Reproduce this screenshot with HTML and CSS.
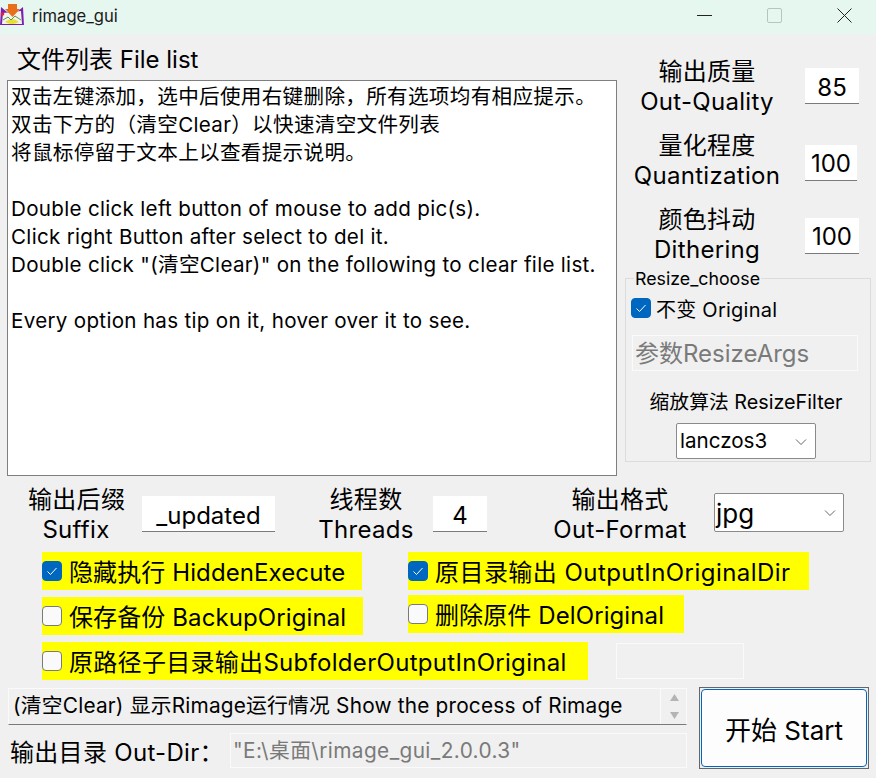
FILE: index.html
```html
<!DOCTYPE html>
<html lang="zh">
<head>
<meta charset="utf-8">
<title>rimage_gui</title>
<link rel="stylesheet" href="styles.css">
</head>
<body>
<div class="window">
  <header class="titlebar">
    <svg class="logo" viewBox="0 0 24 24" width="24" height="24">
      <path d="M1 6 L7 11 H17 L23 6 L24 25 H0 Z" fill="#7a1fb0"/>
      <path d="M3 12 L21 10 L22 23 H2 Z" fill="#f4f4ec"/>
      <path d="M5 21 Q12 15 19 21 Q12 25 5 21 Z" fill="#e8e030"/>
      <path d="M3 19 L8 16 L11 19 L15 15 L21 19" fill="none" stroke="#4a9a5a" stroke-width="1"/>
      <circle cx="2.5" cy="13" r="1.8" fill="#e02040"/>
      <path d="M8 3 H17 V8 H20 L12.5 16 L5 8 H8 Z" fill="#e8701a"/>
    </svg>
    <span class="app-name">rimage_gui</span>
    <div class="win-buttons">
      <svg class="win-btn" viewBox="0 0 15 15" width="15" height="15"><path d="M0 7.5 H15" stroke="#222" stroke-width="1" fill="none"/></svg>
      <svg class="win-btn" viewBox="0 0 15 15" width="15" height="15"><rect x="0.5" y="0.5" width="14" height="14" rx="1.5" fill="none" stroke="#b8c4c0" stroke-width="1"/></svg>
      <svg class="win-btn" viewBox="0 0 15 15" width="15" height="15"><path d="M0.5 0.5 L14.5 14.5 M14.5 0.5 L0.5 14.5" stroke="#222" stroke-width="1" fill="none"/></svg>
    </div>
  </header>

  <main class="content">
    <section class="top">
      <div class="files">
        <div class="files-title">文件列表 File list</div>
        <div class="file-list">
          <p>双击左键添加，选中后使用右键删除，所有选项均有相应提示。</p>
          <p>双击下方的（清空Clear）以快速清空文件列表</p>
          <p>将鼠标停留于文本上以查看提示说明。</p>
          <p>&nbsp;</p>
          <p>Double click left button of mouse to add pic(s).</p>
          <p>Click right Button after select to del it.</p>
          <p>Double click "(清空Clear)" on the following to clear file list.</p>
          <p>&nbsp;</p>
          <p>Every option has tip on it, hover over it to see.</p>
        </div>
      </div>
      <aside class="settings">
        <div class="setting">
          <div class="label label-setting">输出质量<br>Out-Quality</div>
          <div class="field field-q">85</div>
        </div>
        <div class="setting">
          <div class="label label-setting">量化程度<br>Quantization</div>
          <div class="field field-z">100</div>
        </div>
        <div class="setting">
          <div class="label label-setting">颜色抖动<br>Dithering</div>
          <div class="field field-d">100</div>
        </div>
        <div class="group">
          <div class="legend">Resize_choose</div>
          <div class="check check-orig"><span class="box on"><svg viewBox="0 0 20 20" width="20" height="20"><path d="M5.5 10.5 L8.5 13.5 L14.5 7" fill="none" stroke="#fff" stroke-width="1"/></svg></span><span>不变 Original</span></div>
          <div class="disabled-field args">参数ResizeArgs</div>
          <div class="filter-label">缩放算法 ResizeFilter</div>
          <div class="select select-filter">lanczos3<svg class="chev" viewBox="0 0 12 8" width="12" height="8"><path d="M1 1.5 L6 6.5 L11 1.5" fill="none" stroke="#666" stroke-width="1"/></svg></div>
        </div>
      </aside>
    </section>

    <section class="options">
      <div class="label label-suffix">输出后缀<br>Suffix</div>
      <div class="field field-suffix">_updated</div>
      <div class="label label-threads">线程数<br>Threads</div>
      <div class="field field-threads">4</div>
      <div class="label label-format">输出格式<br>Out-Format</div>
      <div class="select select-format">jpg<svg class="chev" viewBox="0 0 12 8" width="12" height="8"><path d="M1 1.5 L6 6.5 L11 1.5" fill="none" stroke="#666" stroke-width="1"/></svg></div>
    </section>

    <section class="checks">
      <div class="check-col">
        <div class="check hl hl-hidden"><span class="box on"><svg viewBox="0 0 20 20" width="20" height="20"><path d="M5.5 10.5 L8.5 13.5 L14.5 7" fill="none" stroke="#fff" stroke-width="1"/></svg></span><span class="hl-text">隐藏执行 HiddenExecute</span></div>
        <div class="check hl hl-backup"><span class="box"></span><span class="hl-text">保存备份 BackupOriginal</span></div>
      </div>
      <div class="check-col check-col-right">
        <div class="check hl hl-dir"><span class="box on"><svg viewBox="0 0 20 20" width="20" height="20"><path d="M5.5 10.5 L8.5 13.5 L14.5 7" fill="none" stroke="#fff" stroke-width="1"/></svg></span><span class="hl-text">原目录输出 OutputInOriginalDir</span></div>
        <div class="check hl hl-del"><span class="box"></span><span class="hl-text">删除原件 DelOriginal</span></div>
      </div>
    </section>
    <section class="sub-row">
      <div class="check hl hl-sub"><span class="box"></span><span class="hl-text">原路径子目录输出SubfolderOutputInOriginal</span></div>
      <div class="disabled-field blank"></div>
    </section>

    <section class="bottom">
      <div class="bottom-left">
        <div class="process">
          <span class="process-text">(清空Clear) 显示Rimage运行情况 Show the process of Rimage</span>
          <div class="spin">
            <svg viewBox="0 0 9 7" width="9" height="7"><path d="M4.5 0 L9 7 H0 Z" fill="#b4b4b4"/></svg>
            <svg viewBox="0 0 9 7" width="9" height="7"><path d="M4.5 7 L9 0 H0 Z" fill="#b4b4b4"/></svg>
          </div>
        </div>
        <div class="outdir">
          <div class="label outdir-label">输出目录 Out-Dir：</div>
          <div class="disabled-field path">"E:\桌面\rimage_gui_2.0.0.3"</div>
        </div>
      </div>
      <div class="start-wrap"><button class="start" type="button">开始 Start</button></div>
    </section>
  </main>
</div>
</body>
</html>
```
FILE: styles.css
```css
* { box-sizing: border-box; }
html, body { margin: 0; padding: 0; }
body {
  width: 876px;
  height: 778px;
  overflow: hidden;
  background: #f0f0f0;
  color: #000;
  font-family: "Inter", "Noto Sans CJK SC", sans-serif;
}
.window { display: flex; flex-direction: column; height: 778px; }

.titlebar {
  height: 34px;
  flex: none;
  display: flex;
  align-items: center;
  background: #e6f7f0;
}
.logo { flex: none; margin-top: -8px; }
.app-name { margin: -2px 0 0 8px; font-size: 16.6px; color: #1a1a1a; }
.win-buttons { margin-left: auto; display: flex; gap: 55px; margin-right: 24px; margin-top: -3px; }
.win-btn { display: block; }

.content { display: flex; flex-direction: column; flex: 1; }

.top { display: flex; height: 444px; }
.files { width: 610px; margin-left: 7px; }
.files-title { height: 46px; padding-left: 10px; font-size: 24px; line-height: 52px; }
.file-list {
  height: 396px;
  background: #fff;
  border: 1px solid #7f7f7f;
  padding: 2px 3px;
  font-size: 20.6px;
  letter-spacing: 0.3px;
  line-height: 28px;
}
.file-list p { margin: 0; white-space: nowrap; }

.settings { width: 246px; margin-left: 8px; padding-top: 22px; display: flex; flex-direction: column; }
.setting { height: 60px; margin-bottom: 14px; display: flex; align-items: center; }
.label { font-size: 24px; letter-spacing: 0.3px; line-height: 30px; text-align: center; white-space: nowrap; }
.label-setting { width: 164px; padding-top: 2px; }
.field {
  background: #fff;
  border-bottom: 1px solid #7a7a7a;
  height: 36px;
  padding-top: 2px;
  font-size: 24px;
  line-height: 35px;
  text-align: center;
  margin-left: 16px;
}
.field-q { width: 54px; }
.field-z { width: 52px; margin-top: 6px; padding-top: 1px; }
.field-d { width: 54px; margin-top: 4px; padding-top: 1px; }

.group {
  position: relative;
  height: 184px;
  border: 1px solid #dcdcdc;
  display: flex;
  flex-direction: column;
}
.legend {
  position: absolute;
  left: 8px;
  top: -11px;
  padding: 0 1px;
  background: #f0f0f0;
  font-size: 17.8px;
  line-height: 22px;
}
.check { display: flex; align-items: center; white-space: nowrap; }
.check-orig { margin: 19px 0 0 5px; height: 20px; font-size: 20px; letter-spacing: 0.25px; }
.box {
  flex: none;
  width: 20px;
  height: 20px;
  margin-right: 7px;
  border: 1px solid #7a7a7a;
  border-radius: 4px;
  background: #fafafa;
}
.box svg { display: block; margin: -1px; }
.box.on { background: #0067c0; border-color: #0067c0; }
.check-orig .box { margin-right: 5px; }

.disabled-field {
  border: 1px solid #fafafa;
  background: #f0f0f0;
  color: #7a7a7a;
  white-space: nowrap;
}
.args { margin: 17px 0 0 6px; width: 226px; height: 36px; font-size: 24px; line-height: 35px; padding-left: 2px; }
.filter-label { margin-top: 18px; text-align: center; font-size: 19.8px; line-height: 26px; white-space: nowrap; width: 240px; }
.select {
  position: relative;
  background: #fff;
  border: 1px solid #8a8a8a;
  border-radius: 2px;
  white-space: nowrap;
}
.select-filter { margin: 8px 0 0 50px; width: 140px; height: 36px; font-size: 20.6px; line-height: 33px; padding-left: 3px; }
.chev { position: absolute; right: 8px; top: 14px; }

.options { display: flex; height: 60px; align-items: flex-start; }
.label-suffix { width: 96px; margin: 7px 0 0 28px; }
.field-suffix { width: 133px; margin: 18px 0 0 18px; }
.label-threads { width: 100px; margin: 7px 0 0 41px; }
.field-threads { width: 54px; margin: 18px 0 0 17px; }
.label-format { width: 150px; margin: 7px 0 0 58px; }
.select-format { width: 130px; height: 39px; margin: 15px 0 0 19px; font-size: 26px; line-height: 40px; padding-left: 1px; }
.select-format .chev { top: 15px; right: 7px; }

.checks { display: flex; margin-top: 14px; }
.check-col { margin-left: 42px; width: 366px; display: flex; flex-direction: column; }
.check-col-right { margin-left: 0; }
.hl { background: #ff0; height: 38px; font-size: 24px; letter-spacing: 0.1px; align-self: flex-start; }
.hl-text { padding-bottom: 2px; }
.hl-hidden { width: 320px; margin-bottom: 7px; }
.hl-backup { width: 321px; }
.hl-dir { width: 401px; margin-bottom: 5px; letter-spacing: 0.45px; }
.hl-del { width: 276px; }
.sub-row { display: flex; margin: 7px 0 0 42px; align-items: center; }
.hl-sub { width: 546px; letter-spacing: 0.3px; }
.blank { width: 128px; height: 36px; margin-left: 28px; }

.bottom { display: flex; margin: 8px 0 0 8px; align-items: flex-start; }
.bottom-left { width: 679px; }
.process {
  height: 37px;
  display: flex;
  background: #f0f0f0;
  border: 1px solid #fafafa;
  border-bottom: 1px solid #7a7a7a;
  font-size: 20.8px;
  letter-spacing: 0.2px;
  line-height: 34px;
}
.process-text { padding-left: 4px; flex: 1; white-space: nowrap; }
.spin { width: 26px; border-left: 1px solid #fafafa; display: flex; flex-direction: column; align-items: center; justify-content: center; gap: 11px; padding-left: 1px; }
.spin svg { display: block; }
.outdir { display: flex; margin-top: 8px; }
.outdir-label { width: 222px; padding-left: 2px; text-align: left; line-height: 40px; }
.path { width: 457px; height: 35px; font-size: 20.8px; letter-spacing: 0.4px; line-height: 33px; padding-left: 2px; }
.start-wrap {
  width: 170px;
  height: 82px;
  margin: -1px 0 0 12px;
  border: 1px solid #666;
  padding: 1px;
}
.start {
  display: block;
  width: 100%;
  height: 100%;
  border: 1px solid #0067c0;
  border-radius: 4px;
  background: #fdfdfd;
  color: #000;
  font: inherit;
  font-size: 26px;
}
```
